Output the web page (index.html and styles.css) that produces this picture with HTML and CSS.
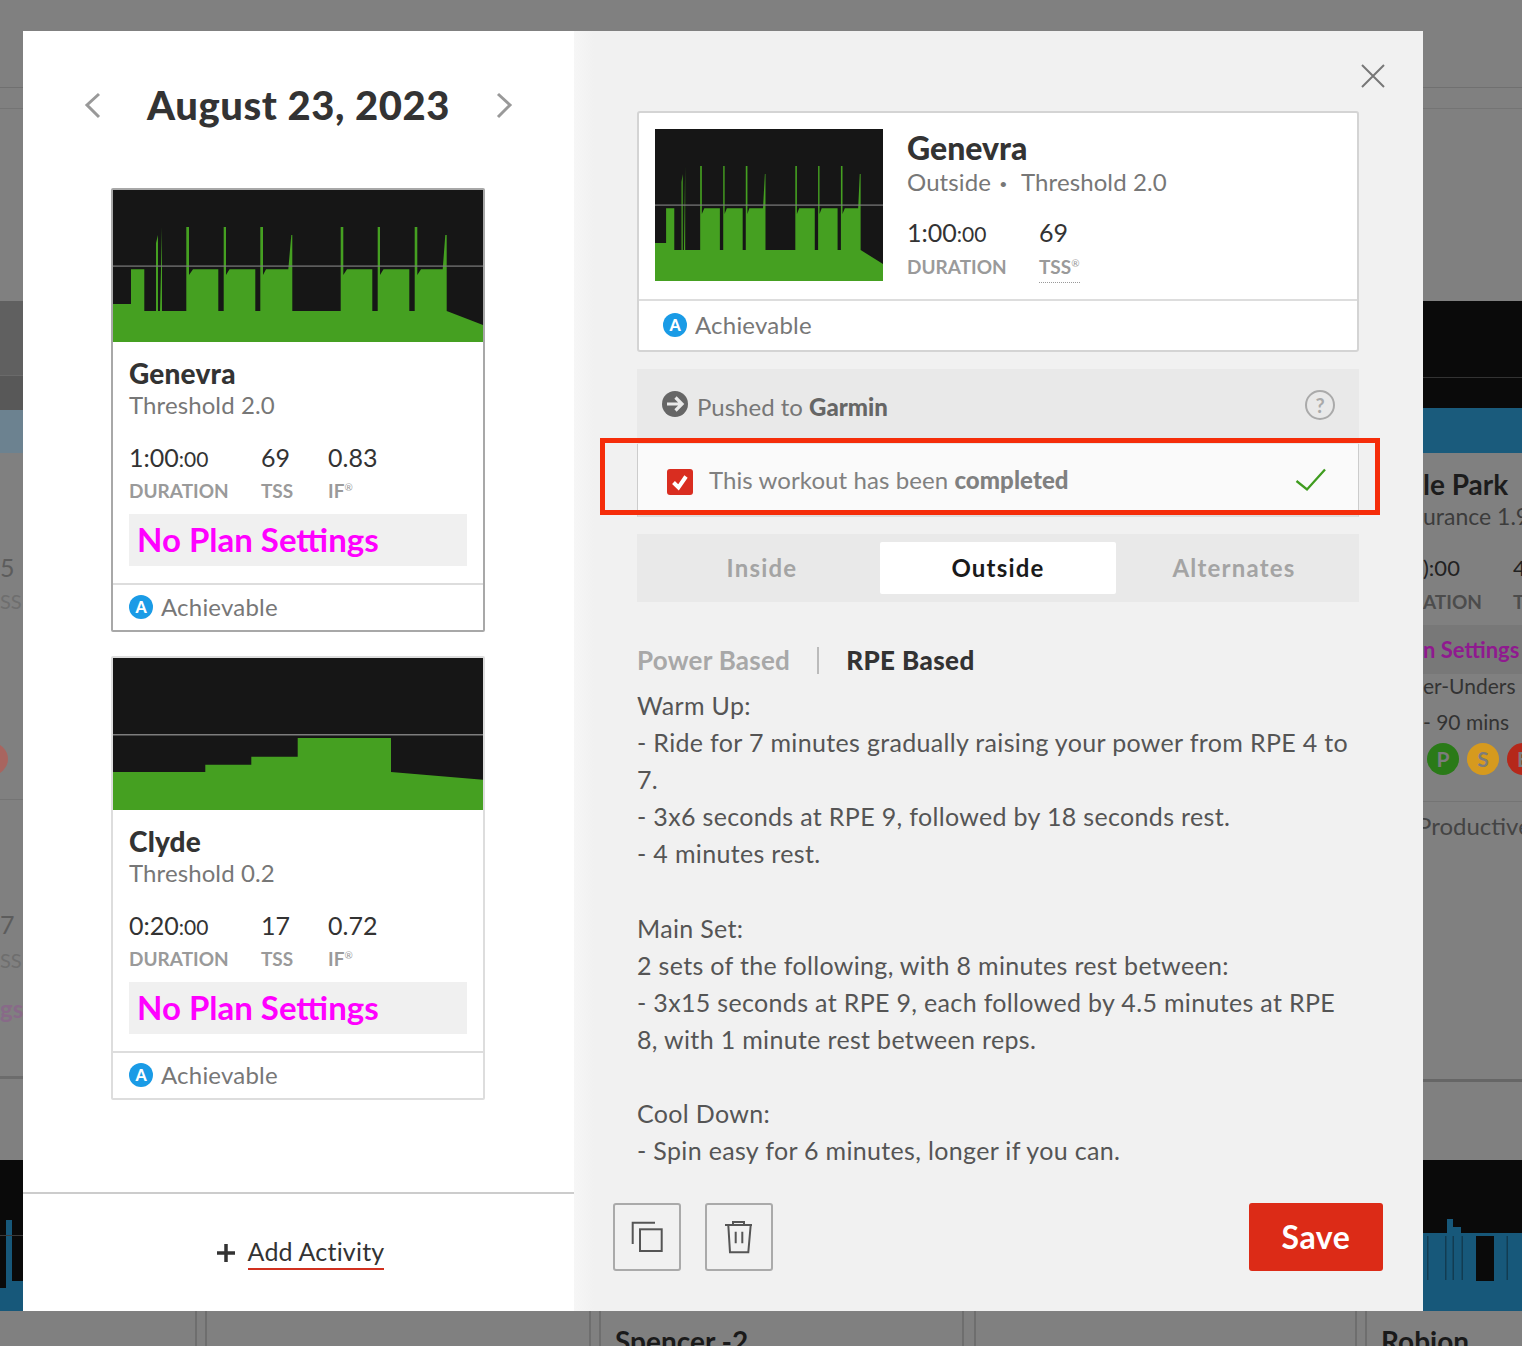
FILE: index.html
```html
<!DOCTYPE html>
<html lang="en">
<head>
<meta charset="utf-8">
<title>August 23, 2023</title>
<link rel="stylesheet" href="styles.css">
</head>
<body>
<svg class="defs" aria-hidden="true">
  <defs>
    <symbol id="chart-genevra" viewBox="0 0 370 152" preserveAspectRatio="none">
      <rect width="370" height="152" fill="#161616"/>
      <path fill="#45a021" d="M0 114H18V79.3H31.3V121H43V53L45 45V121H47L49 37V121H73.3V37H76V85L80 79.3H105.3V121H110.7V37H113V85L116.5 79.3H142.3V121H147.3V37H150V85L153 79.3H175.3L178.3 45H179.3V121H227.7V37H230.3V85L234 79.3H259.3V121H264.7V37H267V85L270.5 79.3H296.3V121H301.7V37H304.3V85L308 79.3H329.7L332.3 45H333.7V121L370 135V152H0Z"/>
      <rect y="75.5" width="370" height="1.2" fill="#7d7d7d"/>
    </symbol>
    <symbol id="chart-clyde" viewBox="0 0 370 152" preserveAspectRatio="none">
      <rect width="370" height="152" fill="#161616"/>
      <path fill="#45a021" d="M0 114H92.3V106.7H138.3V98.7H184.7V80H278V114L370 121.7V152H0Z"/>
      <rect y="76" width="370" height="1.5" fill="#7d7d7d"/>
    </symbol>
  </defs>
</svg>

<div class="page">
  <div class="backdrop">
    <div class="side side-left">
      <div class="side-top"></div>
      <div class="band-dark-a"></div>
      <div class="band-dark-b"></div>
      <div class="band-blue-dim"></div>
      <div class="side-body side-body-left">
        <div class="ghost-num">5</div>
        <div class="ghost-label">SS</div>
        <div class="ghost-dot"></div>
        <div class="ghost-rule"></div>
        <div class="ghost-num ghost-num-b">7</div>
        <div class="ghost-label ghost-label-b">SS</div>
        <div class="ghost-gs">gs</div>
        <div class="ghost-rule ghost-rule-b"></div>
      </div>
      <svg class="side-chart" viewBox="0 0 23 151" preserveAspectRatio="none" aria-hidden="true">
        <rect width="23" height="151" fill="#0a0a0a"/>
        <path fill="#17587a" d="M0 128H6V60H12V121H23V151H0Z"/>
        <rect y="75" width="23" height="1" fill="#3a3a3a"/>
      </svg>
    </div>

    <div class="side side-right">
      <div class="side-top"></div>
      <div class="band-black"></div>
      <div class="band-blue"></div>
      <div class="side-body">
        <div class="r-title">le Park</div>
        <div class="r-sub">urance 1.9</div>
        <div class="r-stats"><span>):00</span><span>4</span></div>
        <div class="r-labels"><span>ATION</span><span>T</span></div>
        <div class="r-plan">n Settings</div>
        <div class="r-line">er-Unders</div>
        <div class="r-line r-line-b">- 90 mins</div>
        <div class="r-badges">
          <span class="r-badge r-badge-p">P</span>
          <span class="r-badge r-badge-s">S</span>
          <span class="r-badge r-badge-e">E</span>
        </div>
        <div class="r-foot">Productive</div>
        <div class="r-rule"></div>
      </div>
      <svg class="side-chart" viewBox="0 0 99 151" preserveAspectRatio="none" aria-hidden="true">
        <rect width="99" height="151" fill="#0a0a0a"/>
        <path fill="#17587a" d="M0 73H24V59H29V59H30V67H38V73H99V151H0Z"/>
        <path fill="#0a0a0a" d="M53 76H71V121H53Z"/>
        <path fill="#123c52" d="M4 76H5.500V120H4ZM22 76H23.500V120H22ZM29.500 76H31V120H29.500ZM38.500 76H40V120H38.500ZM83.500 76H85V120H83.500Z"/>
      </svg>
    </div>
  </div>

  <div class="bottom-strip">
    <div class="strip-cell strip-a"></div>
    <div class="strip-cell strip-b"></div>
    <div class="strip-cell strip-c"><span class="strip-name">Spencer -2</span></div>
    <div class="strip-cell strip-d"></div>
    <div class="strip-cell strip-e"><span class="strip-name">Robion</span></div>
  </div>

  <div class="modal">
    <section class="pane-left">
      <header class="date-head">
        <svg class="chev" viewBox="0 0 18 28" aria-hidden="true"><path d="M15 3 3 14 15 26"/></svg>
        <h1 class="date-title">August 23, 2023</h1>
        <svg class="chev" viewBox="0 0 18 28" aria-hidden="true"><path d="M3 3 15 14 3 26"/></svg>
      </header>

      <div class="cards">
        <article class="card card-selected">
          <svg class="card-chart" aria-hidden="true"><use href="#chart-genevra"/></svg>
          <div class="card-body">
            <div class="card-name">Genevra</div>
            <div class="card-sub">Threshold 2.0</div>
            <div class="stats">
              <div class="stat-val">1:00<small>:00</small></div><div class="stat-val">69</div><div class="stat-val">0.83</div>
              <div class="stat-lab">DURATION</div><div class="stat-lab">TSS</div><div class="stat-lab">IF<sup>®</sup></div>
            </div>
            <div class="plan">No Plan Settings</div>
          </div>
          <div class="card-foot"><span class="a-badge">A</span>Achievable</div>
        </article>

        <article class="card">
          <svg class="card-chart" aria-hidden="true"><use href="#chart-clyde"/></svg>
          <div class="card-body">
            <div class="card-name">Clyde</div>
            <div class="card-sub">Threshold 0.2</div>
            <div class="stats">
              <div class="stat-val">0:20<small>:00</small></div><div class="stat-val">17</div><div class="stat-val">0.72</div>
              <div class="stat-lab">DURATION</div><div class="stat-lab">TSS</div><div class="stat-lab">IF<sup>®</sup></div>
            </div>
            <div class="plan">No Plan Settings</div>
          </div>
          <div class="card-foot"><span class="a-badge">A</span>Achievable</div>
        </article>
      </div>

      <footer class="add-row">
        <svg class="plus" viewBox="0 0 20 20" aria-hidden="true"><path d="M10 1V19M1 10H19"/></svg>
        <span class="add-link">Add Activity</span>
      </footer>
    </section>

    <section class="pane-right">
      <svg class="close" viewBox="0 0 24 24" aria-hidden="true"><path d="M1 1 23 23M23 1 1 23"/></svg>
      <div class="column">
        <div class="detail">
          <div class="detail-top">
            <svg class="detail-chart" aria-hidden="true"><use href="#chart-genevra"/></svg>
            <div class="detail-info">
              <div class="detail-name">Genevra</div>
              <div class="detail-sub">Outside <span class="dot">•</span> Threshold 2.0</div>
              <div class="stats stats-detail">
                <div class="stat-val">1:00<small>:00</small></div><div class="stat-val">69</div>
                <div class="stat-lab">DURATION</div><div class="stat-lab"><span class="tss">TSS<sup>®</sup></span></div>
              </div>
            </div>
          </div>
          <div class="card-foot detail-foot"><span class="a-badge">A</span>Achievable</div>
        </div>

        <div class="pushed">
          <svg class="push-icon" viewBox="0 0 26 26" aria-hidden="true"><circle cx="13" cy="13" r="13" fill="#666"/><path d="M5 13H20M13.500 6.500 20 13 13.500 19.500" fill="none" stroke="#e9e9e9" stroke-width="3.200"/></svg>
          <span class="push-text">Pushed to <b>Garmin</b></span>
          <span class="help">?</span>
        </div>

        <div class="completed">
          <span class="checkbox"><svg viewBox="0 0 26 26" aria-hidden="true"><path d="M6.500 13.500 11.500 18.500 19 7.500" fill="none" stroke="#fff" stroke-width="4"/></svg></span>
          <span class="completed-text">This workout has been <b>completed</b></span>
          <svg class="ok" viewBox="0 0 32 24" aria-hidden="true"><path d="M1.500 13 12 21.500 30 1.500"/></svg>
          <div class="highlight"></div>
        </div>

        <div class="tabs">
          <div class="tab tab-first">Inside</div>
          <div class="tab tab-active">Outside</div>
          <div class="tab tab-last">Alternates</div>
        </div>

        <div class="mode">
          <span class="mode-off">Power Based</span>
          <span class="mode-sep"></span>
          <span class="mode-on">RPE Based</span>
        </div>

        <div class="instructions">
          <p>Warm Up:</p>
          <p>- Ride for 7 minutes gradually raising your power from RPE 4 to 7.</p>
          <p>- 3x6 seconds at RPE 9, followed by 18 seconds rest.</p>
          <p>- 4 minutes rest.</p>
          <p class="blank">&nbsp;</p>
          <p>Main Set:</p>
          <p>2 sets of the following, with 8 minutes rest between:</p>
          <p>- 3x15 seconds at RPE 9, each followed by 4.5 minutes at RPE 8, with 1 minute rest between reps.</p>
          <p class="blank">&nbsp;</p>
          <p>Cool Down:</p>
          <p>- Spin easy for 6 minutes, longer if you can.</p>
        </div>
      </div>

      <footer class="actions">
        <button class="icon-btn" aria-label="Copy"><svg viewBox="0 0 36 36" aria-hidden="true"><path d="M3.700 25V3.700H26"/><rect x="11" y="10.300" width="21.700" height="21.700"/></svg></button>
        <button class="icon-btn" aria-label="Delete"><svg viewBox="0 0 36 36" aria-hidden="true"><path d="M4 6H31M12 6V3H23V6M7.300 6 9 33.300H27.300L29.700 6M14.700 12.700V24.300M21.300 12.700V24.300"/></svg></button>
        <button class="save">Save</button>
      </footer>
    </section>
  </div>
</div>
</body>
</html>
```

FILE: styles.css
```css
* { box-sizing: border-box; }
html, body { margin: 0; padding: 0; }
body { font-family: "Lato", "Liberation Sans", sans-serif; color: #333; }
h1, p { margin: 0; }
.defs { position: absolute; width: 0; height: 0; }

.page { position: relative; width: 1522px; height: 1346px; overflow: hidden; background: #808080; }

/* dimmed application behind the dialog */
.backdrop { display: flex; justify-content: space-between; height: 1311px; }
.side { display: flex; flex-direction: column; overflow: hidden; }
.side-left { width: 23px; }
.side-right { width: 99px; }
.side-top { height: 301px; flex: none; background: linear-gradient(#707070, #707070) 0 87px / 100% 1px no-repeat, linear-gradient(#747474, #747474) 0 108px / 100% 1px no-repeat; }
.band-dark-a { height: 74px; flex: none; background: #606060; }
.band-dark-b { height: 35px; flex: none; background: #585858; border-top: 1px solid #6a6a6a; }
.band-blue-dim { height: 43px; flex: none; background: #6c8290; }
.band-black { height: 107px; flex: none; background: #0a0a0a; background-image: linear-gradient(#333, #333); background-size: 100% 1px; background-position: 0 76px; background-repeat: no-repeat; }
.band-blue { height: 45px; flex: none; background: #1a5b7c; }
.side-body { height: 707px; flex: none; overflow: hidden; }
.side-chart { display: block; flex: none; height: 151px; width: 100%; }

.ghost-num { margin-top: 101px; font-size: 25px; line-height: 26px; color: #5c5c5c; }
.ghost-label { margin-top: 9px; font-size: 20px; line-height: 24px; color: #6e6e6e; }
.ghost-dot { width: 32px; height: 32px; margin: 130px 0 0 -24px; border-radius: 50%; background: #a8655f; }
.ghost-rule { height: 1px; margin-top: 24px; background: #747474; }
.ghost-num-b { margin-top: 111px; }
.ghost-label-b { margin-top: 11px; }
.ghost-gs { margin-top: 23px; font-size: 24px; line-height: 28px; font-weight: 700; color: #886a88; white-space: nowrap; }
.ghost-rule-b { height: 3px; margin-top: 53px; background: #6c6c6c; }

.r-title { margin-top: 15px; font-size: 28px; line-height: 32px; font-weight: 700; color: #1c1c1c; white-space: nowrap; }
.r-sub { margin-top: 1px; font-size: 23px; line-height: 30px; color: #3c3c3c; white-space: nowrap; }
.r-stats { display: flex; gap: 53px; margin-top: 22px; font-size: 22px; line-height: 30px; color: #222; white-space: nowrap; }
.r-labels { display: flex; gap: 31px; margin-top: 7px; font-size: 19px; line-height: 24px; font-weight: 700; color: #4c4c4c; white-space: nowrap; }
.r-plan { margin-top: 11px; font-size: 22px; line-height: 49px; font-weight: 700; color: #8f1a8f; background: #787878; white-space: nowrap; }
.r-line { font-size: 21px; line-height: 24px; color: #333; white-space: nowrap; }
.r-line-b { margin-top: 12px; }
.r-badges { display: flex; gap: 8px; margin-top: 9px; margin-left: 4px; }
.r-badge { flex: none; width: 32px; height: 32px; border-radius: 50%; font-size: 21px; line-height: 32px; font-weight: 700; text-align: center; color: #7c7c7c; }
.r-badge-p { background: #2a7a18; }
.r-badge-s { background: #d69a1e; }
.r-badge-e { background: #b5281a; }
.r-foot { margin-top: 26px; margin-left: -6px; border-top: 1px solid #747474; font-size: 24px; line-height: 48px; color: #444; white-space: nowrap; }
.r-rule { height: 3px; margin-top: 229px; background: #666; }

.bottom-strip { display: flex; height: 35px; }
.strip-cell { flex: none; border-left: 2px solid #6e6e6e; border-right: 2px solid #6e6e6e; padding: 15px 0 0 14px; }
.strip-a { width: 197px; border-left: 0; }
.strip-b { width: 386px; margin-left: 8px; }
.strip-c { width: 365px; margin-left: 8px; }
.strip-d { width: 383px; margin-left: 10px; }
.strip-e { flex: 1; margin-left: 8px; border-right: 0; }
.strip-name { font-size: 28px; line-height: 30px; font-weight: 700; color: #1a1a1a; white-space: nowrap; }

/* dialog */
.modal { position: absolute; left: 23px; top: 31px; display: flex; width: 1400px; height: 1280px; }

.pane-left { display: flex; flex-direction: column; flex: none; width: 551px; background: #fff; }
.date-head { display: flex; align-items: center; justify-content: center; gap: 45px; padding-top: 50px; height: 98px; }
.date-title { font-size: 40px; line-height: 46px; font-weight: 900; letter-spacing: .55px; color: #333; white-space: nowrap; }
.chev { flex: none; width: 18px; height: 28px; }
.chev path { fill: none; stroke: #999; stroke-width: 3; }

.cards { display: flex; flex-direction: column; gap: 24px; width: 374px; margin: 59px 0 0 88px; }
.card { display: flex; flex-direction: column; border: 2px solid #ddd; border-radius: 2px; background: #fff; }
.card-selected { border-color: #a8a8a8; }
.card-chart { display: block; width: 100%; height: 152px; flex: none; }
.card-body { padding: 16px 16px 0; }
.card-name { height: 32px; font-size: 28px; line-height: 30px; font-weight: 900; letter-spacing: .2px; color: #333; }
.card-sub { font-size: 24px; line-height: 30px; height: 32px; letter-spacing: .1px; color: #777; }

.stats { display: grid; grid-template-columns: 132px 67px 1fr; margin-top: 20px; }
.stat-val { height: 32px; font-size: 25px; line-height: 30px; color: #333; white-space: nowrap; }
.stat-val small { font-size: 21px; line-height: 1; }
.stat-lab { height: 24px; margin-top: 5px; font-size: 19px; line-height: 24px; font-weight: 700; color: #9a9a9a; }
.stat-lab sup { font-size: 10px; line-height: 0; font-weight: 400; }
.stats-detail { grid-template-columns: 132px 1fr; margin-top: 17px; }
.stats-detail .stat-lab { margin-top: 6px; }
.tss { display: inline-block; padding-bottom: 3px; border-bottom: 1px dotted #999; line-height: 24px; }

.plan { height: 52px; margin-top: 11px; padding-left: 8px; background: #f0f0f0; font-size: 33px; line-height: 50px; font-weight: 700; color: #f0f; white-space: nowrap; }
.card-foot { display: flex; align-items: center; gap: 8px; height: 47px; margin-top: 17px; padding: 0 0 2px 16px; border-top: 2px solid #ddd; font-size: 24px; letter-spacing: .2px; color: #777; }
.a-badge { flex: none; width: 24px; height: 24px; border-radius: 50%; background: #1a9be6; color: #fff; font-size: 16px; line-height: 24px; font-weight: 900; letter-spacing: 0; text-align: center; }

.add-row { display: flex; align-items: center; justify-content: center; gap: 12px; height: 119px; margin-top: auto; padding-left: 3px; border-top: 2px solid #ccc; }
.plus { flex: none; width: 20px; height: 20px; }
.plus path { fill: none; stroke: #333; stroke-width: 3.500; }
.add-link { padding-bottom: 1px; border-bottom: 2px solid #d0301f; font-size: 25px; line-height: 31px; letter-spacing: .2px; color: #333; }

.pane-right { position: relative; display: flex; flex-direction: column; flex: 1; padding-top: 80px; background: linear-gradient(90deg, #f6f6f6, #f1f1f1 20px); }
.close { position: absolute; top: 33px; left: 787px; width: 24px; height: 24px; }
.close path { fill: none; stroke: #777; stroke-width: 2; }

.column { width: 722px; margin-left: 63px; }
.detail { height: 241px; border: 2px solid #d4d4d4; border-radius: 3px; background: #fff; }
.detail-top { display: flex; gap: 24px; height: 186px; padding: 16px 16px 0; }
.detail-chart { display: block; flex: none; width: 228px; height: 152px; }
.detail-info { padding-top: 1px; }
.detail-name { font-size: 32px; line-height: 36px; font-weight: 900; color: #333; }
.detail-sub { font-size: 24px; line-height: 32px; letter-spacing: .1px; color: #777; }
.dot { display: inline-block; margin: 0 8px 0 2px; font-size: 14px; vertical-align: 2px; }
.detail-foot { height: 51px; margin-top: 0; padding-left: 24px; }

.pushed { display: flex; align-items: center; height: 75px; margin-top: 17px; padding: 0 24px 0 25px; background: #e9e9e9; }
.push-icon { flex: none; width: 26px; height: 26px; margin-top: -5px; }
.push-text { flex: 1; margin-left: 9px; font-size: 24px; color: #777; }
.push-text b { color: #666; font-weight: 900; }
.help { flex: none; width: 30px; height: 30px; margin-top: -3px; border: 2px solid #aaa; border-radius: 50%; font-size: 20px; line-height: 26px; font-weight: 700; text-align: center; color: #aaa; }

.completed { position: relative; display: flex; align-items: center; height: 73px; padding: 0 31px 0 29px; border: solid #ccc; border-width: 0 1px 2px; border-bottom-color: #ddd; background: #fafafa; }
.checkbox { flex: none; width: 26px; height: 26px; margin-top: 5px; border-radius: 3px; background: #d92d20; }
.checkbox svg { display: block; width: 26px; height: 26px; }
.completed-text { flex: 1; margin-left: 16px; font-size: 24px; letter-spacing: .08px; color: #808080; }
.completed-text b { font-weight: 900; }
.ok { flex: none; width: 32px; height: 24px; }
.ok path { fill: none; stroke: #3f9c1f; stroke-width: 2.300; }
.highlight { position: absolute; left: -38px; top: -6px; width: 780px; height: 77px; border: 5px solid #f52d0a; pointer-events: none; }

.tabs { display: grid; grid-template-columns: 243px 236px 243px; height: 68px; margin-top: 17px; padding: 8px 0; background: #e9e9e9; }
.tab { font-size: 24px; line-height: 52px; font-weight: 700; letter-spacing: 1.200px; text-align: center; color: #a4a4a4; }
.tab-first { padding-left: 7px; }
.tab-last { padding-right: 7px; }
.tab-active { border-radius: 2px; background: #fff; color: #1a1a1a; }

.mode { display: flex; align-items: center; height: 30px; margin-top: 43px; font-size: 26px; font-weight: 700; }
.mode-off { letter-spacing: .25px; color: #a8a8a8; }
.mode-sep { width: 2px; height: 27px; margin: 0 27px; background: #bbb; }
.mode-on { letter-spacing: .4px; color: #333; font-weight: 900; }

.instructions { margin-top: 12px; font-size: 25px; line-height: 37.100px; letter-spacing: .33px; color: #555; }

.actions { display: flex; gap: 24px; margin-top: auto; padding: 0 40px 40px 39px; }
.icon-btn { display: flex; align-items: center; justify-content: center; width: 68px; height: 68px; padding: 0; border: 2px solid #aaa; border-radius: 3px; background: transparent; }
.icon-btn svg { width: 36px; height: 36px; }
.icon-btn path, .icon-btn rect { fill: none; stroke: #555; stroke-width: 2; }
.save { width: 134px; height: 68px; padding: 0 0 2px; margin-left: auto; border: 0; border-radius: 3px; background: #dc2b17; color: #fff; font-family: inherit; font-size: 32px; font-weight: 700; letter-spacing: .6px; }
```
